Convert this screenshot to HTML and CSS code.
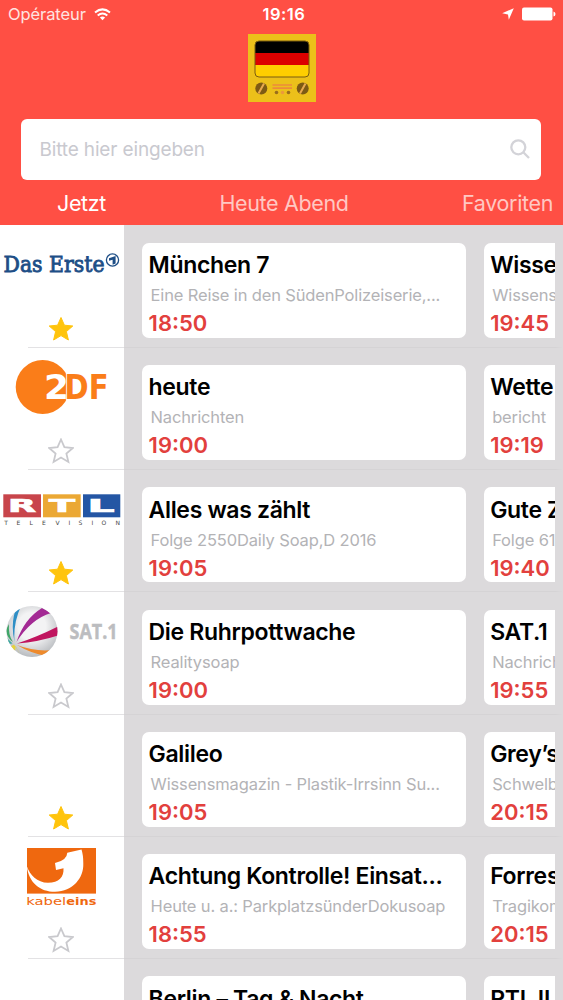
FILE: index.html
```html
<!DOCTYPE html>
<html lang="de">
<head>
    <meta charset="UTF-8">
    <meta name="viewport" content="width=device-width, initial-scale=1.0">
    <title>TV Programm</title>
    <link rel="stylesheet" href="styles.css">
</head>
<body>
    <svg class="defs" width="0" height="0">
        <symbol id="star" viewBox="0 0 26 26">
            <path d="M13 1.5 L16.4 9.2 L24.8 10 L18.4 15.6 L20.4 24 L13 19.6 L5.6 24 L7.6 15.6 L1.2 10 L9.6 9.2 Z"/>
        </symbol>
    </svg>
    <header>
        <div class="status">
            <div class="carrier">
                <span>Opérateur</span>
                <svg width="17" height="13" viewBox="0 0 17 13" fill="none" stroke="#fff" stroke-width="2">
                    <path d="M1 4.6 Q8.5 -1.8 16 4.6"/>
                    <path d="M3.7 7.5 Q8.5 3.4 13.3 7.5"/>
                    <path d="M8.5 12.2 L5.9 9.6 Q8.5 7.6 11.1 9.6 Z" fill="#fff" stroke="none"/>
                </svg>
            </div>
            <div class="clock">19:16</div>
            <div class="battery">
                <svg width="12" height="12" viewBox="0 0 12 12"><path d="M11.8 .2 L6.8 11.8 L6 6.4 L.2 5.2 Z" fill="#fff"/></svg>
                <svg width="34" height="14" viewBox="0 0 34 14" fill="#fff"><rect x="0" y="0.5" width="30.5" height="13" rx="2"/><path d="M31.5 4.5 Q33.5 5 33.5 7 Q33.5 9 31.5 9.5 Z"/></svg>
            </div>
        </div>
        <svg class="app-icon" width="68" height="68" viewBox="0 0 68 68">
            <rect width="68" height="68" fill="#ecc01a"/>
            <clipPath id="screen"><rect x="7" y="7" width="54" height="36" rx="4"/></clipPath>
            <g clip-path="url(#screen)">
                <rect x="7" y="7" width="54" height="12" fill="#000"/>
                <rect x="7" y="19" width="54" height="12" fill="#dc0000"/>
                <rect x="7" y="31" width="54" height="12" fill="#ffce00"/>
            </g>
            <rect x="7" y="7" width="54" height="36" rx="4" fill="none" stroke="#7a5c10" stroke-width="1"/>
            <g fill="#7d5a14"><circle cx="13.3" cy="54.5" r="6"/><circle cx="54.7" cy="54.5" r="6"/></g>
            <path d="M10.5 59.5 L16 49.5 M52 59.5 L57.5 49.5" stroke="#e8a850" stroke-width="2"/>
            <path d="M24.5 51 H44 M24.5 54.2 H44" stroke="#ec8a3c" stroke-width="1.7"/>
            <g fill="#9a6e1c"><circle cx="28.5" cy="58.5" r="1.8"/><circle cx="40.5" cy="58.5" r="1.8"/></g>
            <circle cx="34.5" cy="58.5" r="1.8" fill="#ec9a3c"/>
        </svg>
        <div class="search">
            <span>Bitte hier eingeben</span>
            <svg width="20" height="20" viewBox="0 0 20 20" fill="none" stroke="#d3d3d8" stroke-width="2.3"><circle cx="8.3" cy="8.3" r="7"/><path d="M13.3 13.3 L19 19"/></svg>
        </div>
        <nav>
            <span class="tab active">Jetzt</span>
            <span class="tab">Heute Abend</span>
            <span class="tab">Favoriten</span>
        </nav>
    </header>
    <main>
        <div class="row">
            <div class="channel">
                <svg class="logo" viewBox="0 0 124 90">
                    <text x="3.5" y="46.8" class="erste" textLength="101" lengthAdjust="spacingAndGlyphs">Das Erste</text>
                    <circle cx="112.5" cy="35" r="6.1" fill="#fff" stroke="#1d4e86" stroke-width="1.3"/>
                    <path d="M109 33.2 L115.6 31 V38.6 L112.6 39.8 V34.8 L109 35.8 Z" fill="#1d4e86"/>
                </svg>
                <svg class="star on"><use href="#star"/></svg>
            </div>
            <div class="programs">
                <article><h2>München 7</h2><p>Eine Reise in den SüdenPolizeiserie,...</p><time>18:50</time></article>
                <article><h2>Wisse</h2><p>Wissens</p><time>19:45</time></article>
            </div>
        </div>
        <div class="row">
            <div class="channel">
                <svg class="logo" viewBox="0 0 124 90">
                    <circle cx="42.7" cy="39" r="27" fill="#fa7d19"/>
                    <text x="64.5" y="51" class="zdf orange" textLength="44" lengthAdjust="spacingAndGlyphs">DF</text>
                    <text x="44" y="51" class="zdf" textLength="25" lengthAdjust="spacingAndGlyphs">2</text>
                </svg>
                <svg class="star"><use href="#star"/></svg>
            </div>
            <div class="programs">
                <article><h2>heute</h2><p>Nachrichten</p><time>19:00</time></article>
                <article><h2>Wette</h2><p>bericht</p><time>19:19</time></article>
            </div>
        </div>
        <div class="row">
            <div class="channel">
                <svg class="logo" viewBox="0 0 124 90">
                    <rect x="3.3" y="24.3" width="37.7" height="23" fill="#c8454b"/>
                    <rect x="43" y="24.3" width="37.7" height="23" fill="#eba834"/>
                    <rect x="83" y="24.3" width="37.3" height="23" fill="#2456a4"/>
                    <text x="8" y="42" class="rtl" textLength="28" lengthAdjust="spacingAndGlyphs">R</text>
                    <text x="49" y="42" class="rtl" textLength="26" lengthAdjust="spacingAndGlyphs">T</text>
                    <text x="87.5" y="42" class="rtl" textLength="27" lengthAdjust="spacingAndGlyphs">L</text>
                    <text x="4.2 16.6 29.6 42 55.6 68.4 78.5 91.5 101.4 115.4" y="55" class="television">TELEVISION</text>
                </svg>
                <svg class="star on"><use href="#star"/></svg>
            </div>
            <div class="programs">
                <article><h2>Alles was zählt</h2><p>Folge 2550Daily Soap,D 2016</p><time>19:05</time></article>
                <article><h2>Gute Z</h2><p>Folge 61</p><time>19:40</time></article>
            </div>
        </div>
        <div class="row">
            <div class="channel">
                <svg class="logo" viewBox="0 0 124 90">
                    <defs>
                        <radialGradient id="ball" cx=".5" cy=".4" r=".6"><stop offset=".45" stop-color="#f3f3f4"/><stop offset="1" stop-color="#b9bcc0"/></radialGradient>
                        <clipPath id="ballClip"><circle cx="32" cy="39.4" r="25.5"/></clipPath>
                    </defs>
                    <circle cx="32" cy="39.4" r="25.5" fill="url(#ball)"/>
                    <g clip-path="url(#ballClip)">
                        <path d="M14.5 50 Q10 30 17 14 L22 12 Q13 30 14.5 50 Z" fill="#2f8fc6"/>
                        <path d="M16.5 50 Q24 27 42 16 L51 21 Q31 27 16.5 50 Z" fill="#a32a94"/>
                        <path d="M17 51.5 Q37 45 58 34.5 V43.5 Q38 50 17 51.5 Z" fill="#c0155f"/>
                        <path d="M17 53 Q35 60 53 58 L46 64 Q30 61 17 53 Z" fill="#ee8a2c"/>
                        <path d="M13 50 Q8 43 9 32 L6 38 Q7 46 13 50 Z" fill="#3fa668"/>
                        <path d="M12.5 51.5 L6 45 L8 52 Z" fill="#3aa8a0"/>
                        <path d="M14 52.5 L10 55 L15 60 L15.5 54 L20 62 Z" fill="#e6d23c"/>
                    </g>
                    <text x="69.5" y="47" class="sat" textLength="48" lengthAdjust="spacingAndGlyphs">SAT.1</text>
                </svg>
                <svg class="star"><use href="#star"/></svg>
            </div>
            <div class="programs">
                <article><h2>Die Ruhrpottwache</h2><p>Realitysoap</p><time>19:00</time></article>
                <article><h2>SAT.1</h2><p>Nachrich</p><time>19:55</time></article>
            </div>
        </div>
        <div class="row">
            <div class="channel">
                <svg class="logo" viewBox="0 0 124 90"></svg>
                <svg class="star on"><use href="#star"/></svg>
            </div>
            <div class="programs">
                <article><h2>Galileo</h2><p>Wissensmagazin - Plastik-Irrsinn Su...</p><time>19:05</time></article>
                <article><h2>Grey’s</h2><p>Schwelb</p><time>20:15</time></article>
            </div>
        </div>
        <div class="row">
            <div class="channel">
                <svg class="logo" viewBox="0 0 124 90">
                    <rect x="27" y="11" width="69" height="45.6" fill="#ef680f"/>
                    <path d="M26.7 29 C29 46 40 54.8 55 54.8 C73 54 83.8 41 83.3 26.4 Q83.3 18 81.5 12.6 L67.3 15.8 Q67 23.5 55 26 L56 33.1 L63.5 31.2 C64 40 59 45.8 48 45.8 C37 45.6 30 38 26.7 29 Z" fill="#fff"/>
                    <text x="26.2" y="67.5" class="kabel" textLength="40" lengthAdjust="spacingAndGlyphs">kabel</text>
                    <text x="66.3" y="67.5" class="kabel eins" textLength="30" lengthAdjust="spacingAndGlyphs">eins</text>
                </svg>
                <svg class="star"><use href="#star"/></svg>
            </div>
            <div class="programs">
                <article><h2>Achtung Kontrolle! Einsat...</h2><p>Heute u. a.: ParkplatzsünderDokusoap</p><time>18:55</time></article>
                <article><h2>Forres</h2><p>Tragikom</p><time>20:15</time></article>
            </div>
        </div>
        <div class="row">
            <div class="channel"></div>
            <div class="programs">
                <article><h2>Berlin – Tag &amp; Nacht</h2></article>
                <article><h2>RTL II</h2></article>
            </div>
        </div>
    </main>
</body>
</html>
```
FILE: styles.css
```css
* {
    box-sizing: border-box;
    margin: 0;
    padding: 0;
}

body {
    height: 1000px;
    overflow: hidden;
    font-family: Inter, "Liberation Sans", sans-serif;
    background-color: #fff;
    color: #000;
}

svg {
    display: block;
    flex: none;
}

.defs {
    position: absolute;
}

/* Header */
header {
    height: 225.4px;
    background-color: #ff4f44;
    display: flex;
    flex-direction: column;
}

.status {
    display: grid;
    grid-template-columns: 1fr auto 1fr;
    align-items: center;
    flex: none;
    height: 28px;
    padding: 0 7px 0 8px;
    color: #fff;
    font-size: 16.5px;
}

.carrier {
    display: flex;
    align-items: center;
    gap: 8px;
    color: #ffe3e0;
    letter-spacing: -0.1px;
}

.clock {
    font-weight: 600;
    padding-left: 4px;
    letter-spacing: 0.5px;
}

.battery {
    display: flex;
    align-items: center;
    justify-content: flex-end;
    gap: 8px;
}

.app-icon {
    margin: 6px 0 0 248px;
}

.search {
    display: flex;
    align-items: center;
    justify-content: space-between;
    flex: none;
    height: 61px;
    margin: 16.5px 22px 0 20.5px;
    padding: 0 11px 0 19px;
    border-radius: 6px;
    background-color: #fff;
    color: #c9c9cf;
    font-size: 19px;
    letter-spacing: -0.15px;
}

nav {
    display: flex;
    justify-content: space-between;
    padding: 0 10px 0 57px;
    line-height: 46px;
    font-size: 21.5px;
    letter-spacing: -0.35px;
}

.tab {
    color: #ffc8c3;
}

.tab.active {
    color: #fff;
}

/* Channel rows */
main {
    height: 774.6px;
    overflow: hidden;
}

.row {
    display: flex;
    height: 122.3px;
}

.channel {
    width: 124px;
    flex: none;
    display: flex;
    flex-direction: column;
}

.channel::after {
    content: "";
    height: 1px;
    margin: auto 0 0 28px;
    background-color: #e3e2e4;
}

.logo {
    width: 124px;
    height: 90px;
}

.star {
    width: 26px;
    height: 26px;
    margin: 0.5px 0 0 48px;
    fill: #fff;
    stroke: #c9c9cd;
    stroke-width: 1.8;
}

.star.on {
    fill: #ffc40c;
    stroke: #ffc40c;
    stroke-width: 1;
}

.programs {
    flex: 1;
    display: flex;
    gap: 18px;
    padding: 17.3px 0 0 18.4px;
    border-right: 8px solid #dcdadc;
    border-bottom: 1px solid #d5d3d5;
    background-color: #dcdadc;
    overflow: hidden;
}

article {
    width: 323.6px;
    height: 95px;
    flex: none;
    padding: 6.3px 6.2px 0;
    border-radius: 7px;
    background-color: #fff;
    white-space: nowrap;
}

h2 {
    font-size: 23px;
    font-weight: 600;
    line-height: 32px;
    letter-spacing: -0.33px;
}

article p {
    padding-left: 2px;
    color: #b3b3b6;
    font-size: 16.5px;
    line-height: 28px;
    letter-spacing: -0.15px;
}

time {
    display: block;
    color: #e2403d;
    font-size: 22px;
    font-weight: 600;
    line-height: 28px;
}

/* Logo lettering */
.erste {
    font: 22.5px "DejaVu Serif", serif;
    fill: #1d4e86;
    stroke: #1d4e86;
    stroke-width: .9;
}

.zdf {
    font: bold 33px "DejaVu Sans", sans-serif;
    fill: #fff;
}

.zdf.orange {
    fill: #fa7d19;
    stroke: #fff;
    stroke-width: 2;
    paint-order: stroke;
}

.rtl {
    font: bold 17px "DejaVu Sans", sans-serif;
    fill: #fff;
    stroke: #fff;
    stroke-width: .7;
}

.television {
    font: 6px "DejaVu Sans", sans-serif;
    fill: #444;
}

.sat {
    font: bold 22px "Open Sans", sans-serif;
    fill: #bcbdc0;
    stroke: #bcbdc0;
    stroke-width: .5;
}

.kabel {
    font: 11px "DejaVu Sans", sans-serif;
    fill: #ef680f;
}

.kabel.eins {
    font-weight: bold;
}
```
